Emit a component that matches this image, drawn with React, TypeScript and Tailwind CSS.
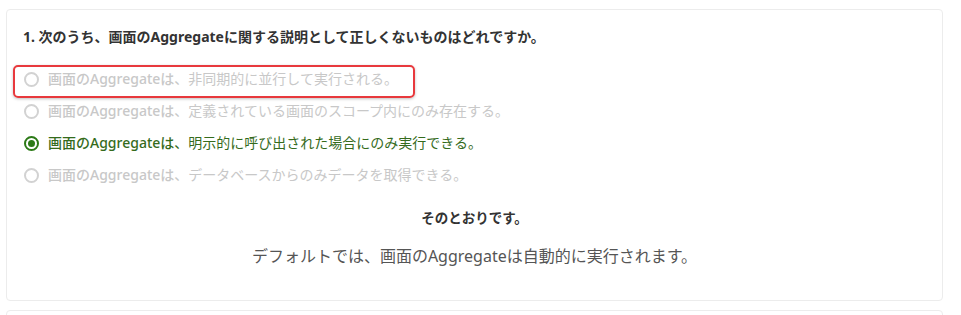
import React from "react";

const font = { fontFamily: '"Noto Sans", "Noto Sans CJK JP", sans-serif' };

type Opt = { rest: string; state: "off" | "on" };

const options: Opt[] = [
  { rest: "、非同期的に並行して実行される。", state: "off" },
  { rest: "、定義されている画面のスコープ内にのみ存在する。", state: "off" },
  { rest: "、明示的に呼び出された場合にのみ実行できる。", state: "on" },
  { rest: "、データベースからのみデータを取得できる。", state: "off" },
];

function Radio({ on }: { on: boolean }) {
  return on ? (
    <span className="flex h-[15px] w-[15px] items-center justify-center rounded-full border-2 border-[#2c7a17]">
      <span className="h-[7px] w-[7px] rounded-full bg-[#2c7a17]" />
    </span>
  ) : (
    <span className="h-[15px] w-[15px] rounded-full border-2 border-[#d2d2d2]" />
  );
}

export default function App() {
  return (
    <div className="h-[315px] overflow-hidden bg-white pt-[9px]" style={font}>
      <div className="relative ml-[6px] w-[937px] rounded-[4px] border border-[#ececec] bg-white pb-[32px] pl-[16px] pt-[16px]">
        <div className="text-[14px] font-bold leading-[22px] text-[#333]">
          1. 次のうち、画面のAggregateに関する説明として正しくないものはどれですか。
        </div>
        <div className="mt-[20px] flex flex-col gap-[10px]">
          {options.map((o, i) => (
            <div key={i} className="flex h-[22px] items-center gap-[9px] pl-[1px]">
              <Radio on={o.state === "on"} />
              <span
                className={
                  "text-[14px] leading-[22px] " +
                  (o.state === "on" ? "text-[#356b1c]" : "text-[#c8c8c8]")
                }
              >
                <span className="font-medium">画面のAggregateは</span>
                {o.rest}
              </span>
            </div>
          ))}
        </div>
        <div className="mt-[22px] pr-[16px] text-center text-[13.5px] font-bold leading-[20px] text-[#333]">
          そのとおりです。
        </div>
        <div className="mt-[16px] pr-[16px] text-center text-[16px] leading-[24px] text-[#555]">
          デフォルトでは、画面のAggregateは自動的に実行されます。
        </div>
        <div className="pointer-events-none absolute left-[6px] top-[55px] h-[33px] w-[402px] rounded-[5px] border-2 border-[#e8393d] shadow-[0_1px_3px_rgba(0,0,0,0.25)]" />
      </div>
      <div className="ml-[6px] mt-[9px] h-[20px] w-[937px] rounded-[4px] border border-[#ececec] bg-white" />
    </div>
  );
}
